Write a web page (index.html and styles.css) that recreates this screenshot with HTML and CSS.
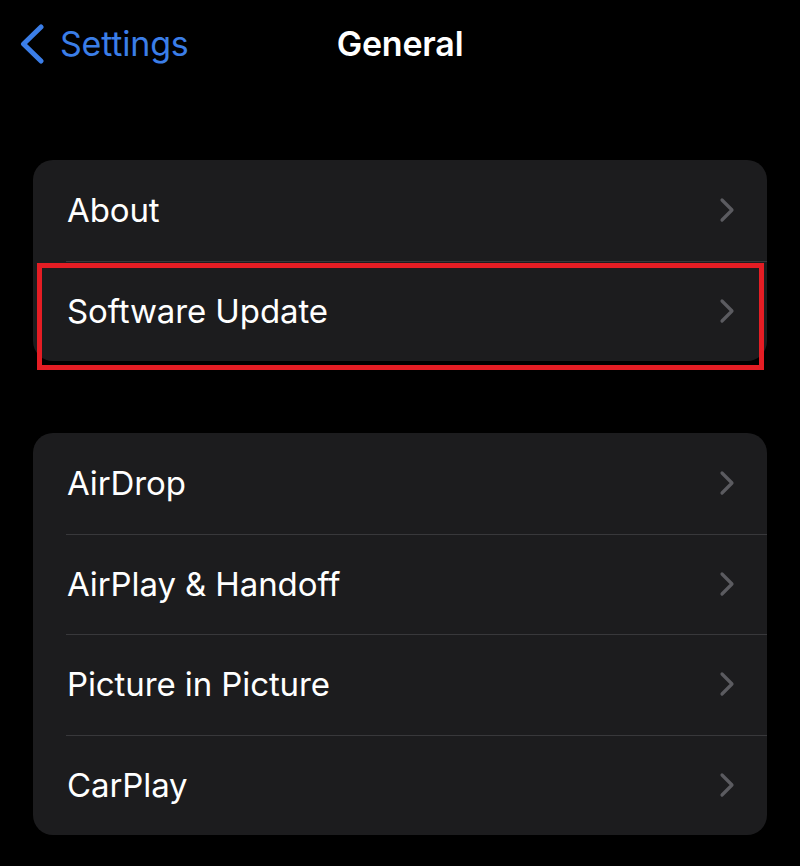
FILE: index.html
```html
<!DOCTYPE html>
<html>
<head>
<meta charset="utf-8">
<link rel="stylesheet" href="styles.css">
</head>
<body>
<div class="screen">
  <header class="nav">
    <a class="back">
      <svg class="back-icon" width="26" height="40" viewBox="0 0 26 40"><path d="M22 3 L4.5 20 L22 37" fill="none" stroke="#3b7ee8" stroke-width="5" stroke-linecap="round" stroke-linejoin="round"/></svg>
      <span class="back-label">Settings</span>
    </a>
    <h1 class="title">General</h1>
  </header>

  <section class="group">
    <div class="row"><span class="label">About</span><svg class="chev" width="16" height="26" viewBox="0 0 16 26"><path d="M3 3 L13 13 L3 23" fill="none" stroke="#5b5b60" stroke-width="3.2" stroke-linecap="round" stroke-linejoin="round"/></svg></div>
    <div class="row highlighted"><span class="label">Software Update</span><svg class="chev" width="16" height="26" viewBox="0 0 16 26"><path d="M3 3 L13 13 L3 23" fill="none" stroke="#5b5b60" stroke-width="3.2" stroke-linecap="round" stroke-linejoin="round"/></svg></div>
  </section>

  <section class="group">
    <div class="row"><span class="label">AirDrop</span><svg class="chev" width="16" height="26" viewBox="0 0 16 26"><path d="M3 3 L13 13 L3 23" fill="none" stroke="#5b5b60" stroke-width="3.2" stroke-linecap="round" stroke-linejoin="round"/></svg></div>
    <div class="row"><span class="label">AirPlay &amp; Handoff</span><svg class="chev" width="16" height="26" viewBox="0 0 16 26"><path d="M3 3 L13 13 L3 23" fill="none" stroke="#5b5b60" stroke-width="3.2" stroke-linecap="round" stroke-linejoin="round"/></svg></div>
    <div class="row"><span class="label">Picture in Picture</span><svg class="chev" width="16" height="26" viewBox="0 0 16 26"><path d="M3 3 L13 13 L3 23" fill="none" stroke="#5b5b60" stroke-width="3.2" stroke-linecap="round" stroke-linejoin="round"/></svg></div>
    <div class="row"><span class="label">CarPlay</span><svg class="chev" width="16" height="26" viewBox="0 0 16 26"><path d="M3 3 L13 13 L3 23" fill="none" stroke="#5b5b60" stroke-width="3.2" stroke-linecap="round" stroke-linejoin="round"/></svg></div>
  </section>
</div>
</body>
</html>
```
FILE: styles.css
```css
* { box-sizing: border-box; }
html, body { margin: 0; padding: 0; background: #000; }
body { width: 800px; height: 866px; overflow: hidden; font-family: "Inter", "Liberation Sans", sans-serif; color: #fff; }

.screen { padding: 0 33px; }

.nav {
  position: relative;
  height: 86px;
  display: flex;
  align-items: center;
  justify-content: center;
}
.back {
  position: absolute;
  left: -14px;
  top: 23px;
  display: flex;
  align-items: center;
  gap: 15px;
  color: #3b7ee8;
}
.back-label { font-size: 34px; letter-spacing: -0.2px; }
.title { margin: 0; font-size: 34px; font-weight: 600; letter-spacing: -0.2px; }

.group {
  background: #1c1c1e;
  border-radius: 20px;
  margin-top: 74px;
}
.group + .group { margin-top: 72px; }

.row {
  position: relative;
  height: 100.5px;
  display: flex;
  align-items: center;
  justify-content: space-between;
  padding: 0 32px 0 34px;
}
.row + .row::before {
  content: "";
  position: absolute;
  left: 33px;
  right: 0;
  top: 0;
  height: 1px;
  background: #38383b;
}
.label { font-size: 33px; letter-spacing: -0.1px; }

.highlighted::after {
  content: "";
  position: absolute;
  left: 4px;
  right: 3px;
  top: 2px;
  bottom: -9px;
  border: 5px solid #e41d24;
}
```
